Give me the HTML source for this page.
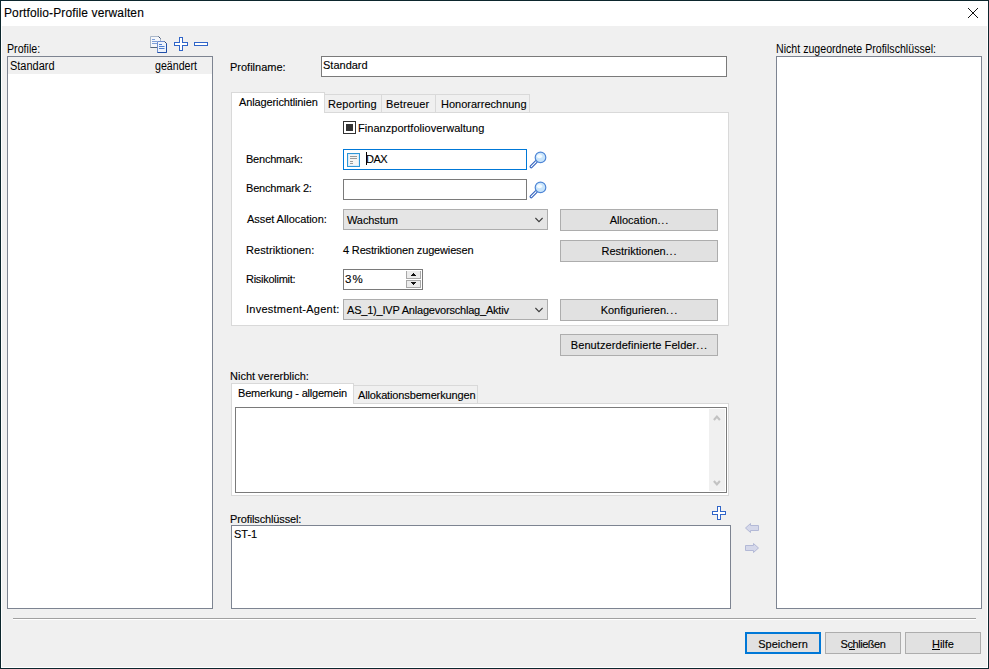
<!DOCTYPE html>
<html><head><meta charset="utf-8">
<style>
*{box-sizing:border-box;margin:0;padding:0}
html,body{width:989px;height:669px;overflow:hidden;background:#f0f0f0}
body{position:relative;font-family:"Liberation Sans",sans-serif;font-size:11px;color:#000;-webkit-text-stroke:0.12px #000}
.a{position:absolute}
.t{position:absolute;white-space:nowrap;line-height:13px}
.box{position:absolute;background:#fff;border:1px solid #7a7a7a}
.btn{position:absolute;background:#e1e1e1;border:1px solid #adadad;text-align:center;line-height:20px;white-space:nowrap}
.combo{position:absolute;background:#e5e5e5;border:1px solid #adadad}
.tab{position:absolute;background:#f0f0f0;border:1px solid #d9d9d9;border-bottom:none}
.tabsel{position:absolute;background:#fff;border:1px solid #d9d9d9;border-bottom:none}
.page{position:absolute;background:#fff;border:1px solid #d9d9d9}
svg{position:absolute;overflow:visible}
</style></head><body>
<!-- window frame -->
<div class="a" style="left:0;top:0;width:989px;height:669px;border:1px solid #0c262d"></div>
<div class="a" style="left:1px;top:1px;width:987px;height:25px;background:#fff"></div>
<div class="a" style="left:1px;top:26px;width:1px;height:642px;background:#fff"></div>
<div class="a" style="left:987px;top:26px;width:1px;height:642px;background:#fff"></div>
<div class="a" style="left:1px;top:667px;width:987px;height:1px;background:#fff"></div>
<div class="t" style="left:4px;top:7px;font-size:12px;letter-spacing:0.12px">Portfolio-Profile verwalten</div>
<svg style="left:968px;top:8px" width="10" height="10" viewBox="0 0 10 10" shape-rendering="crispEdges"><path d="M0 0h1v1h-1zM9 0h1v1h-1zM1 1h1v1h-1zM8 1h1v1h-1zM2 2h1v1h-1zM7 2h1v1h-1zM3 3h1v1h-1zM6 3h1v1h-1zM4 4h1v1h-1zM5 4h1v1h-1zM5 5h1v1h-1zM4 5h1v1h-1zM6 6h1v1h-1zM3 6h1v1h-1zM7 7h1v1h-1zM2 7h1v1h-1zM8 8h1v1h-1zM1 8h1v1h-1zM9 9h1v1h-1zM0 9h1v1h-1z" fill="#111"/></svg>

<!-- left panel -->
<div class="t" style="left:7px;top:43px;font-size:12px;-webkit-text-stroke:0;transform:scaleX(0.888);transform-origin:0 0">Profile:</div>
<svg style="left:150px;top:36px" width="18" height="17" viewBox="0 0 18 17">
  <path d="M0.5 0.5h8l2 2v9h-10z" fill="#f4f6fa" stroke="#a9b6c8"/>
  <path d="M0.5 11.5h10" stroke="#55657a"/>
  <path d="M2 3.5h3M2 5.5h5M2 7.5h5" stroke="#7fa0d8"/>
  <path d="M7.5 5.5h7l2 2v9h-9z" fill="#eef3fb" stroke="#6f8fd0"/>
  <path d="M16.5 7.5v9h-9" stroke="#1f4fa8" fill="none"/>
  <path d="M9 8.5h3M9 10.5h5.5M9 12.5h5.5" stroke="#4f7fd0"/>
  <path d="M8.5 0.5l2 2M14.5 5.5l2 2" stroke="#34476a"/>
</svg>
<svg style="left:174px;top:37px" width="14" height="14" viewBox="0 0 14 14" shape-rendering="crispEdges"><path d="M5.5 0.5H8.5V5.5H13.5V8.5H8.5V13.5H5.5V8.5H0.5V5.5H5.5Z" fill="#fff" stroke="#3065c8"/></svg>
<svg style="left:194px;top:37px" width="14" height="14" viewBox="0 0 14 14" shape-rendering="crispEdges"><path d="M0.5 5.5H13.5V8.5H0.5Z" fill="#fff" stroke="#3065c8"/></svg>
<div class="box" style="left:7px;top:56px;width:206px;height:553px;border-color:#7d8491"></div>
<div class="a" style="left:8px;top:57px;width:204px;height:17px;background:#f0f0f0"></div>
<div class="t" style="left:10px;top:60px;font-size:12px;-webkit-text-stroke:0;transform:scaleX(0.915);transform-origin:0 0">Standard</div>
<div class="t" style="left:155px;top:60px;font-size:12px;-webkit-text-stroke:0;transform:scaleX(0.886);transform-origin:0 0">geändert</div>

<!-- right panel -->
<div class="t" style="left:776px;top:43px;font-size:12px;-webkit-text-stroke:0;transform:scaleX(0.885);transform-origin:0 0">Nicht zugeordnete Profilschlüssel:</div>
<div class="box" style="left:776px;top:56px;width:206px;height:553px;border-color:#7d8491"></div>

<!-- profilname -->
<div class="t" style="left:230px;top:61px">Profilname:</div>
<div class="box" style="left:321px;top:56px;width:406px;height:21px"></div>
<div class="t" style="left:323px;top:59px">Standard</div>

<!-- tabs -->
<div class="page" style="left:231px;top:112px;width:498px;height:214px"></div>
<div class="tab" style="left:324px;top:94px;width:58px;height:18px"></div>
<div class="tab" style="left:381px;top:94px;width:55px;height:18px"></div>
<div class="tab" style="left:435px;top:94px;width:95px;height:18px"></div>
<div class="tabsel" style="left:231px;top:92px;width:94px;height:21px"></div>
<div class="t" style="left:239px;top:96px;letter-spacing:-0.12px">Anlagerichtlinien</div>
<div class="t" style="left:328px;top:98px;letter-spacing:0.12px">Reporting</div>
<div class="t" style="left:386px;top:98px;letter-spacing:0.14px">Betreuer</div>
<div class="t" style="left:441px;top:98px">Honorarrechnung</div>

<div class="a" style="left:343px;top:121px;width:13px;height:13px;border:1px solid #333;background:#fff"></div>
<div class="a" style="left:346px;top:124px;width:7px;height:7px;background:#333"></div>
<div class="t" style="left:358px;top:122px;letter-spacing:0.04px">Finanzportfolioverwaltung</div>

<div class="t" style="left:246px;top:153px;letter-spacing:-0.22px">Benchmark:</div>
<div class="box" style="left:343px;top:149px;width:184px;height:21px;border-color:#0078d7"></div>
<svg style="left:347px;top:153px" width="13" height="14" viewBox="0 0 13 14" shape-rendering="crispEdges">
  <rect x="0.5" y="0.5" width="12" height="13" fill="#f6f6f4" stroke="#2f97d6"/>
  <rect x="1.5" y="1.5" width="10" height="11" fill="none" stroke="#dcecfb"/>
  <path d="M3 3.5h7M3 5.5h7M3 8.5h3M3 10.5h3" stroke="#9a9a9a"/>
</svg>
<div class="a" style="left:366px;top:152px;width:1px;height:13px;background:#000"></div>
<div class="t" style="left:366px;top:153px;letter-spacing:-0.5px">DAX</div>
<svg style="left:529px;top:152px" width="18" height="17" viewBox="0 0 18 17">
  <path d="M7.2 9.6L2.2 14.6" stroke="#3565c0" stroke-width="3.4" stroke-linecap="round"/>
  <path d="M7.2 9.6L2.2 14.6" stroke="#fff" stroke-width="1.1" stroke-linecap="round"/>
  <circle cx="11.5" cy="5.4" r="5.3" fill="#c9e5fb" stroke="#4f86d6" stroke-width="1.2"/>
  <ellipse cx="10.5" cy="4.3" rx="2.6" ry="2" fill="#f4fbff"/>
</svg>

<div class="t" style="left:246px;top:182px;letter-spacing:-0.18px">Benchmark 2:</div>
<div class="box" style="left:343px;top:179px;width:184px;height:21px"></div>
<svg style="left:529px;top:182px" width="18" height="17" viewBox="0 0 18 17">
  <path d="M7.2 9.6L2.2 14.6" stroke="#3565c0" stroke-width="3.4" stroke-linecap="round"/>
  <path d="M7.2 9.6L2.2 14.6" stroke="#fff" stroke-width="1.1" stroke-linecap="round"/>
  <circle cx="11.5" cy="5.4" r="5.3" fill="#c9e5fb" stroke="#4f86d6" stroke-width="1.2"/>
  <ellipse cx="10.5" cy="4.3" rx="2.6" ry="2" fill="#f4fbff"/>
</svg>

<div class="t" style="left:247px;top:213px;letter-spacing:-0.06px">Asset Allocation:</div>
<div class="combo" style="left:343px;top:209px;width:205px;height:21px"></div>
<div class="t" style="left:347px;top:214px;letter-spacing:-0.1px">Wachstum</div>
<svg style="left:535px;top:217px" width="9" height="6" viewBox="0 0 9 6"><path d="M0.4 1L4 4.6L7.6 1" fill="none" stroke="#3c3c3c" stroke-width="1.1"/></svg>
<div class="btn" style="left:560px;top:209px;width:158px;height:22px">Allocation<span style="letter-spacing:0.85px">..</span>.</div>

<div class="t" style="left:246px;top:244px;letter-spacing:0.08px">Restriktionen:</div>
<div class="t" style="left:343px;top:244px;letter-spacing:-0.16px">4 Restriktionen zugewiesen</div>
<div class="btn" style="left:560px;top:240px;width:158px;height:22px;letter-spacing:0.0px">Restriktionen<span style="letter-spacing:0.85px">..</span>.</div>

<div class="t" style="left:246px;top:273px;letter-spacing:-0.27px">Risikolimit:</div>
<div class="box" style="left:343px;top:269px;width:80px;height:21px"></div>
<div class="t" style="left:345px;top:273px;font-size:11.5px;letter-spacing:1.2px">3%</div>
<div class="a" style="left:406px;top:271px;width:15px;height:8px;background:#ececec;border:1px solid #a8a8a8;border-top:none"></div>
<div class="a" style="left:406px;top:280px;width:15px;height:8px;background:#ececec;border:1px solid #a8a8a8"></div>
<svg style="left:411px;top:273px" width="5" height="3" viewBox="0 0 5 3" shape-rendering="crispEdges"><path d="M2 0h1v1h1v1h1v1h-5v-1h1v-1h1z" fill="#111"/></svg>
<svg style="left:411px;top:282px" width="5" height="3" viewBox="0 0 5 3" shape-rendering="crispEdges"><path d="M0 0h5v1h-1v1h-1v1h-1v-1h-1v-1h-1z" fill="#111"/></svg>

<div class="t" style="left:246px;top:303px;letter-spacing:0.25px">Investment-Agent:</div>
<div class="combo" style="left:343px;top:299px;width:205px;height:21px"></div>
<div class="t" style="left:347px;top:304px;letter-spacing:-0.2px">AS_1)_IVP Anlagevorschlag_Aktiv</div>
<svg style="left:535px;top:307px" width="9" height="6" viewBox="0 0 9 6"><path d="M0.4 1L4 4.6L7.6 1" fill="none" stroke="#3c3c3c" stroke-width="1.1"/></svg>
<div class="btn" style="left:560px;top:299px;width:158px;height:22px;letter-spacing:0.0px">Konfigurieren<span style="letter-spacing:1.05px">..</span>.</div>

<div class="btn" style="left:560px;top:334px;width:158px;height:22px;letter-spacing:0.08px">Benutzerdefinierte Felder<span style="letter-spacing:0.85px">..</span>.</div>

<!-- nicht vererblich -->
<div class="t" style="left:230px;top:370px">Nicht vererblich:</div>
<div class="page" style="left:231px;top:403px;width:498px;height:93px"></div>
<div class="tab" style="left:353px;top:385px;width:125px;height:18px"></div>
<div class="tabsel" style="left:231px;top:383px;width:123px;height:21px"></div>
<div class="t" style="left:238px;top:387px;letter-spacing:-0.2px">Bemerkung - allgemein</div>
<div class="t" style="left:358px;top:389px;letter-spacing:-0.14px">Allokationsbemerkungen</div>
<div class="box" style="left:235px;top:407px;width:492px;height:86px"></div>
<div class="a" style="left:709px;top:409px;width:16px;height:82px;background:#f0f0f0"></div>
<svg style="left:713px;top:415px" width="8" height="6" viewBox="0 0 8 6"><path d="M0.9 4.9L3.9 1.6L6.9 4.9" fill="none" stroke="#c2c2c2" stroke-width="2.2"/></svg>
<svg style="left:713px;top:480px" width="8" height="6" viewBox="0 0 8 6"><path d="M0.9 1.1L3.9 4.4L6.9 1.1" fill="none" stroke="#c2c2c2" stroke-width="2.2"/></svg>

<!-- profilschluessel -->
<div class="t" style="left:230px;top:513px;letter-spacing:-0.13px">Profilschlüssel:</div>
<svg style="left:712px;top:506px" width="14" height="14" viewBox="0 0 14 14" shape-rendering="crispEdges"><path d="M5.5 0.5H8.5V5.5H13.5V8.5H8.5V13.5H5.5V8.5H0.5V5.5H5.5Z" fill="#fff" stroke="#3065c8"/></svg>
<div class="box" style="left:231px;top:525px;width:500px;height:84px;border-color:#7d8491"></div>
<div class="t" style="left:234px;top:528px">ST-1</div>
<svg style="left:745px;top:523px" width="14" height="10" viewBox="0 0 14 10"><path d="M0.5 5L5.5 0.5V2.5H13.5V7.5H5.5V9.5Z" fill="#d5d8ea" stroke="#b3b9d6"/></svg>
<svg style="left:745px;top:543px" width="14" height="10" viewBox="0 0 14 10"><path d="M13.5 5L8.5 0.5V2.5H0.5V7.5H8.5V9.5Z" fill="#d5d8ea" stroke="#b3b9d6"/></svg>

<!-- separator and buttons -->
<div class="a" style="left:13px;top:618px;width:963px;height:1px;background:#a0a0a0"></div>
<div class="a" style="left:13px;top:619px;width:963px;height:1px;background:#fff"></div>
<div class="btn" style="left:745px;top:632px;width:76px;height:22px;border:2px solid #0078d7;line-height:20px">Speichern</div>
<div class="btn" style="left:825px;top:632px;width:76px;height:22px;line-height:22px;letter-spacing:-0.45px">Schließen</div>
<div class="a" style="left:849px;top:649px;width:6px;height:1px;background:#000"></div>
<div class="btn" style="left:905px;top:632px;width:76px;height:22px;line-height:22px">Hilfe</div>
<div class="a" style="left:932px;top:649px;width:8px;height:1px;background:#000"></div>
</body></html>
